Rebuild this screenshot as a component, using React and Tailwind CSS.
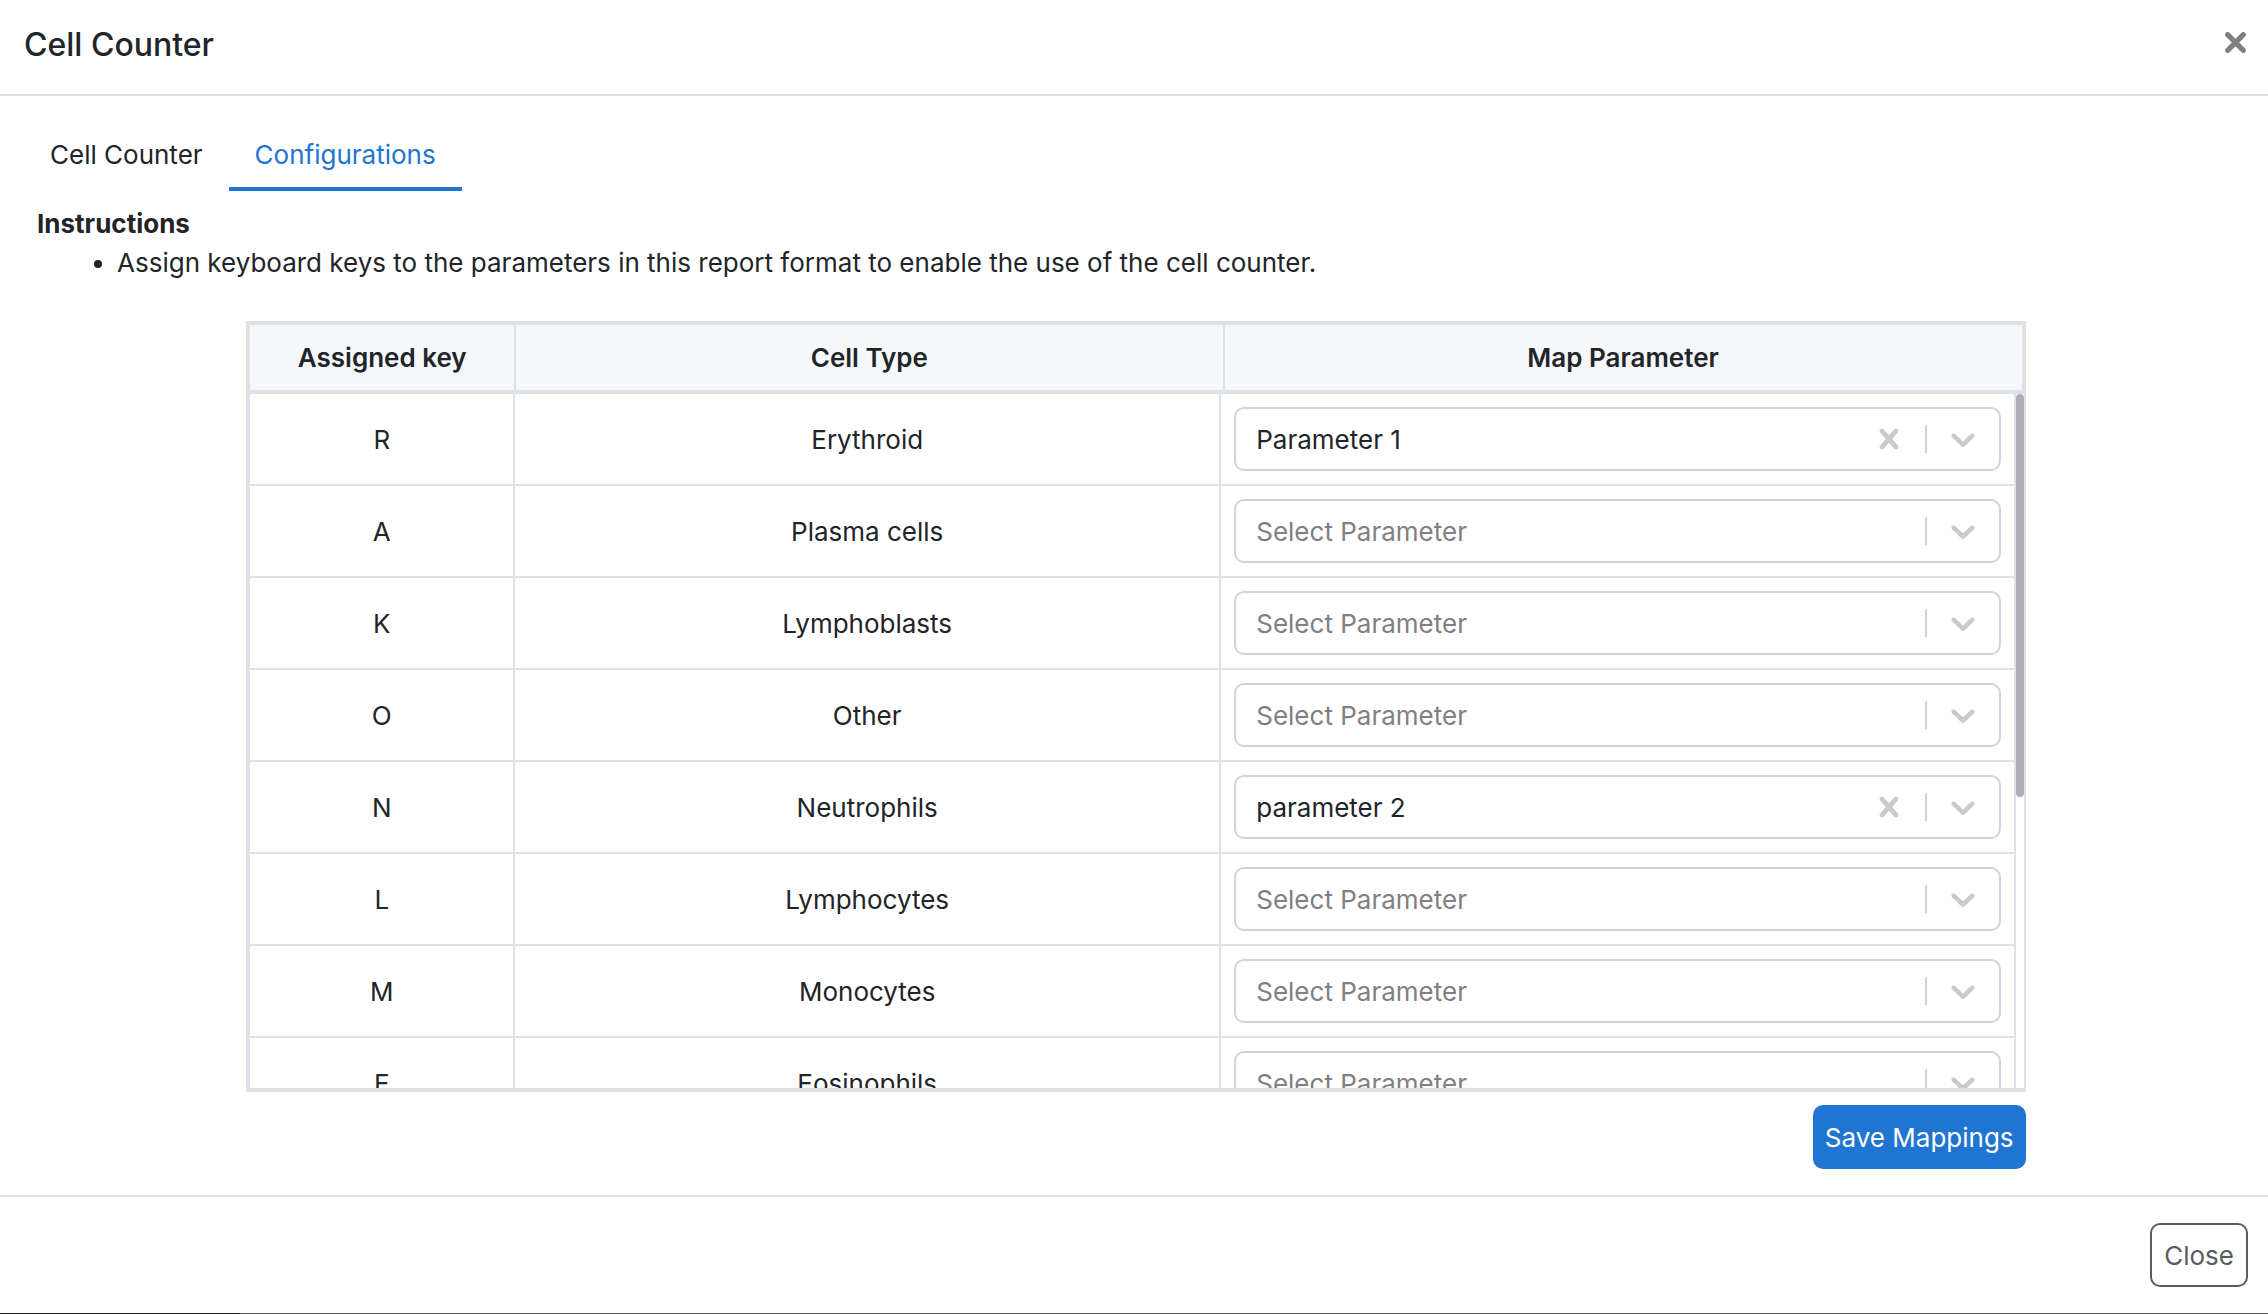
import React, { useEffect, useRef, useState } from 'react';

const parameters = ['Parameter 1', 'parameter 2', 'parameter 3', 'parameter 4'];

const initialRows = [
  { key: 'R', cellType: 'Erythroid', parameter: 'Parameter 1' },
  { key: 'A', cellType: 'Plasma cells', parameter: '' },
  { key: 'K', cellType: 'Lymphoblasts', parameter: '' },
  { key: 'O', cellType: 'Other', parameter: '' },
  { key: 'N', cellType: 'Neutrophils', parameter: 'parameter 2' },
  { key: 'L', cellType: 'Lymphocytes', parameter: '' },
  { key: 'M', cellType: 'Monocytes', parameter: '' },
  { key: 'E', cellType: 'Eosinophils', parameter: '' },
  { key: 'B', cellType: 'Basophils', parameter: '' },
  { key: 'Y', cellType: 'Myelocytes', parameter: '' },
  { key: 'T', cellType: 'Metamyelocytes', parameter: '' },
  { key: 'P', cellType: 'Promyelocytes', parameter: '' },
  { key: 'Z', cellType: 'Blasts', parameter: '' },
];

const CrossIcon = () => (
  <svg className="size-10" viewBox="0 0 20 20" fill="currentColor" aria-hidden="true">
    <path d="M14.348 14.849c-0.469 0.469-1.229 0.469-1.697 0l-2.651-3.030-2.651 3.029c-0.469 0.469-1.229 0.469-1.697 0-0.469-0.469-0.469-1.229 0-1.697l2.758-3.15-2.759-3.152c-0.469-0.469-0.469-1.228 0-1.697s1.228-0.469 1.697 0l2.652 3.031 2.651-3.031c0.469-0.469 1.228-0.469 1.697 0s0.469 1.229 0 1.697l-2.758 3.152 2.758 3.15c0.469 0.469 0.469 1.229 0 1.698z" />
  </svg>
);

const ChevronIcon = () => (
  <svg className="size-10" viewBox="0 0 20 20" fill="currentColor" aria-hidden="true">
    <path d="M4.516 7.548c0.436-0.446 1.043-0.481 1.576 0l3.908 3.747 3.908-3.747c0.533-0.481 1.141-0.446 1.574 0 0.436 0.445 0.408 1.197 0 1.615-0.406 0.418-4.695 4.502-4.695 4.502-0.217 0.223-0.502 0.335-0.787 0.335s-0.57-0.112-0.789-0.335c0 0-4.287-4.084-4.695-4.502s-0.436-1.17 0-1.615z" />
  </svg>
);

// Dropdown with an optional clear button, the icons share the grid cell of the select
const ParameterSelect = ({ label, value, onChange }) => (
  <div className="grid h-16 items-center rounded-[10px] border-2 border-[#ced4de] bg-white">
    <select
      aria-label={label}
      value={value}
      onChange={(e) => onChange(e.target.value)}
      className={`col-start-1 row-start-1 h-full w-full appearance-none rounded-lg bg-transparent pr-36 pl-5 ${value ? 'text-[#212529]' : 'text-[#808080]'}`}
    >
      <option value="">Select Parameter</option>
      {parameters.map((parameter) => (
        <option key={parameter} value={parameter}>{parameter}</option>
      ))}
    </select>
    <div className="pointer-events-none col-start-1 row-start-1 flex items-center justify-self-end text-[#c8cacc]">
      {value && (
        <button
          type="button"
          aria-label="Clear parameter"
          className="pointer-events-auto px-4"
          onClick={() => onChange('')}
        >
          <CrossIcon />
        </button>
      )}
      <span className="h-7 w-0.5 bg-[#ced4de]" />
      <span className="px-4">
        <ChevronIcon />
      </span>
    </div>
  </div>
);

const MappingTable = ({ rows, onChangeParameter }) => {
  const bodyRef = useRef(null);
  const [thumb, setThumb] = useState({ top: 0, height: 0 });

  // Work out size and place of the scroll thumb
  const updateThumb = () => {
    const { scrollTop, scrollHeight, clientHeight } = bodyRef.current;
    const ratio = clientHeight / scrollHeight;
    setThumb({ top: Math.round(scrollTop * ratio), height: Math.round(clientHeight * ratio) });
  };

  useEffect(() => {
    updateThumb();
    window.addEventListener('resize', updateThumb);
    return () => window.removeEventListener('resize', updateThumb);
  }, []);

  return (
    <div className="relative">
      <table className="block border-separate border-spacing-0 text-center">
        <thead className="block border-4 border-[#dee2e6] bg-[#f5f7f9]">
          <tr className="table w-full table-fixed">
            <th className="w-[15%] border-r-2 border-[#dee2e6] p-[13px] font-semibold">Assigned key</th>
            <th className="w-[40%] border-r-2 border-[#dee2e6] p-[13px] font-semibold">Cell Type</th>
            <th className="w-[45%] p-[13px] font-semibold">Map Parameter</th>
          </tr>
        </thead>
        <tbody
          ref={bodyRef}
          onScroll={updateThumb}
          className="block h-[calc(100vh-616px)] overflow-y-auto border-r-2 border-b-4 border-l-4 border-[#dee2e6] pr-2 [scrollbar-width:none]"
        >
          {rows.map((row) => (
            <tr key={row.key} className="table w-full table-fixed">
              <td className="w-[15%] border-r-2 border-b-2 border-[#dee2e6] p-[13px]">{row.key}</td>
              <td className="w-[40%] border-r-2 border-b-2 border-[#dee2e6] p-[13px]">{row.cellType}</td>
              <td className="w-[45%] border-r-2 border-b-2 border-[#dee2e6] p-[13px]">
                <ParameterSelect
                  label={`Parameter for ${row.cellType}`}
                  value={row.parameter}
                  onChange={(value) => onChangeParameter(row.key, value)}
                />
              </td>
            </tr>
          ))}
        </tbody>
      </table>
      <div
        className="absolute top-[73px] right-0.5 w-2 rounded-full bg-[#aeafb4]"
        style={{ height: thumb.height, transform: `translateY(${thumb.top}px)` }}
      />
    </div>
  );
};

const App = () => {
  const [activeTab, setActiveTab] = useState('Configurations');
  const [rows, setRows] = useState(initialRows);

  const handleChangeParameter = (key, parameter) => {
    setRows(rows.map((row) => (row.key === key ? { ...row, parameter } : row)));
  };

  return (
    <div className="flex min-h-screen flex-col bg-white font-['Inter',sans-serif] text-[26px] leading-[39px] text-[#212529]">
      <header className="flex items-start justify-between border-b-2 border-[#dee2e6] px-6 pt-[21px] pr-[22px] pb-[25px]">
        <h1 className="text-[32px] leading-[48px] font-medium">Cell Counter</h1>
        <button type="button" aria-label="Close dialog" className="pt-[11px] text-[#808080]">
          <svg className="size-[21px]" viewBox="0 0 21 21" fill="none" stroke="currentColor" strokeWidth="5" aria-hidden="true">
            <path d="M2 2l17 17M19 2l-17 17" />
            <path d="M2.6 2.6l15.8 15.8M18.4 2.6l-15.8 15.8" strokeLinecap="round" />
          </svg>
        </button>
      </header>

      <main className="grow py-[26px] pr-5 pl-6">
        <div role="tablist" className="flex">
          {['Cell Counter', 'Configurations'].map((tab) => (
            <button
              key={tab}
              type="button"
              role="tab"
              aria-selected={tab === activeTab}
              onClick={() => setActiveTab(tab)}
              className={`border-b-4 px-[26px] py-[13px] ${tab === activeTab ? 'border-[#1f75d1] text-[#1f75d1]' : 'border-transparent'}`}
            >
              {tab}
            </button>
          ))}
        </div>

        <section className="px-[13px] pt-[13px]">
          <h2 className="font-bold">Instructions</h2>
          <ul className="list-disc pl-20">
            <li>Assign keyboard keys to the parameters in this report format to enable the use of the cell counter.</li>
          </ul>
        </section>

        <section className="mx-auto mt-[39px] w-4/5">
          <MappingTable rows={rows} onChangeParameter={handleChangeParameter} />
          <div className="mt-[13px] flex justify-end">
            <button type="button" className="h-16 rounded-[10px] bg-[#1f75d1] px-3 text-white">
              Save Mappings
            </button>
          </div>
        </section>
      </main>

      <footer className="flex justify-end border-t-2 border-[#dee2e6] px-5 py-[26px]">
        <button type="button" className="h-16 rounded-[10px] border-2 border-[#5a5c5f] px-3 text-[#5a5c5f]">
          Close
        </button>
      </footer>
      <div className="flex h-px bg-[#5f5f5f]">
        <span className="w-60 bg-[#212121]" />
      </div>
    </div>
  );
};

export default App;
